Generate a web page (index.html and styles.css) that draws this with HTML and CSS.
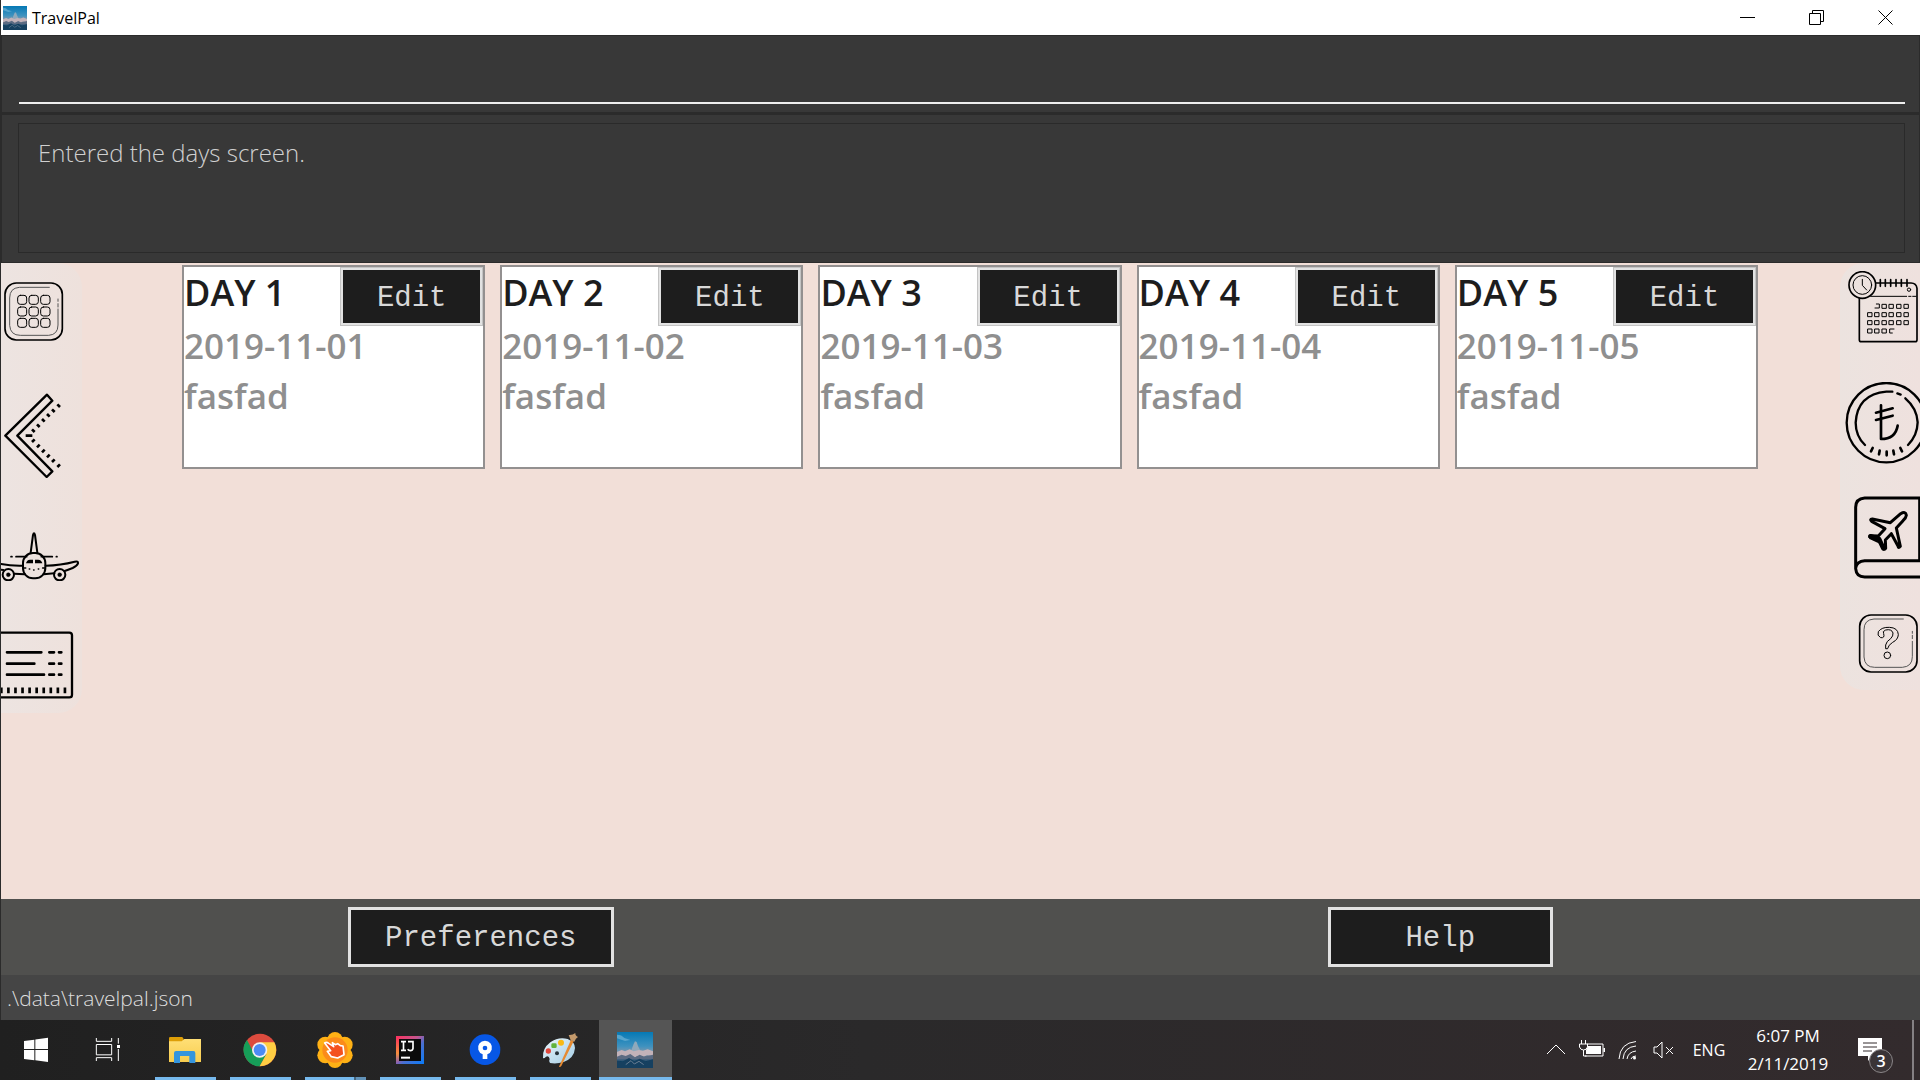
FILE: index.html
```html
<!DOCTYPE html>
<html lang="en">
<head>
<meta charset="utf-8">
<title>TravelPal</title>
<link rel="stylesheet" href="styles.css">
</head>
<body>
<svg class="defs" width="0" height="0" aria-hidden="true">
  <defs>
    <linearGradient id="sky" x1="0" y1="0" x2="0" y2="1"><stop offset="0" stop-color="#0579b5"/><stop offset=".4" stop-color="#3f92bf"/><stop offset=".58" stop-color="#8698ab"/><stop offset=".75" stop-color="#3c5f7d"/><stop offset="1" stop-color="#0b3350"/></linearGradient>
    <linearGradient id="folder" x1="0" y1="0" x2="0" y2="1"><stop offset="0" stop-color="#ffdf76"/><stop offset="1" stop-color="#f8cd4f"/></linearGradient>
    <linearGradient id="ij" x1="0" y1="0" x2="1" y2="1"><stop offset="0" stop-color="#fe315d"/><stop offset=".4" stop-color="#c4568f"/><stop offset=".6" stop-color="#4b6fd0"/><stop offset="1" stop-color="#087cfa"/></linearGradient>
    <linearGradient id="ijl" x1="0" y1="0" x2="0" y2="1"><stop offset="0" stop-color="#fe315d"/><stop offset=".6" stop-color="#f68f3c"/><stop offset="1" stop-color="#7a5bc0"/></linearGradient>
    <linearGradient id="palette" x1="0" y1="0" x2="1" y2="1"><stop offset="0" stop-color="#eaf6fc"/><stop offset="1" stop-color="#a3cce4"/></linearGradient>
    <filter id="soft"><feGaussianBlur stdDeviation="2"/></filter>
    <symbol id="peak" viewBox="0 0 108 108">
      <rect width="108" height="108" fill="url(#sky)"/>
      <g filter="url(#soft)">
        <path d="M0 8q14 0 22 10l18 6-16 3-24-8z" fill="#6db2d6" opacity=".7"/>
        <path d="M44 52l6-16 4-8 5 2 4 12 6 12-4 10H42z" fill="#8fa9bb"/>
        <path d="M0 60l14-6 10 4 14-6 12 6 16-4 12 2 14-4 16 6v14l-18-2-14 6-14-4-16 8-14-6-16 6-16-6z" fill="#c3b2b9"/>
        <path d="M0 74l14-6 12 4 14-6 14 10 14-8 14 6 26-6v14H0z" fill="#5a6a82"/>
        <path d="M0 86l18 2 18-10 16 10 16-8 18 8 22-6v26H0z" fill="#123f60"/>
        <path d="M26 98l16-12 10 10 14-8 14 10" fill="none" stroke="#6b7e92" stroke-width="3"/>
      </g>
    </symbol>
  </defs>
</svg>

<div class="window">
  <header class="titlebar">
    <svg class="app-icon" viewBox="0 0 108 108"><use href="#peak"/></svg>
    <h1 class="app-title">TravelPal</h1>
    <button class="caption-btn" aria-label="Minimize"><svg width="15" height="15"><path d="M0 7.500h15" stroke="#000"/></svg></button>
    <button class="caption-btn" aria-label="Restore"><svg width="15" height="15"><path d="M.5 3.500h11v11H.5zM3.500 3.500v-3h11v11h-3" fill="none" stroke="#000"/></svg></button>
    <button class="caption-btn" aria-label="Close"><svg width="15" height="15"><path d="M.5 .5l14 14M14.500 .5l-14 14" stroke="#000"/></svg></button>
  </header>

  <section class="command"><input class="command-input" type="text" aria-label="Command"></section>
  <section class="result"><output class="result-box">Entered the days screen.</output></section>

  <main class="planner">
    <nav class="strip strip-left" aria-label="Screens">
      <button class="tool" aria-label="Main"><svg width="81" height="59" viewBox="3 81 243 177" class="line">
        <rect x="15" y="84" width="172" height="171" rx="34" stroke-width="5"/>
        <path d="M148 97H58q-29 2-29 32v82q2 30 32 30h85q28-2 28-31v-48M174 156v-10M174 139v-7" stroke-width="3" stroke="#555"/>
        <g stroke-width="3"><rect x="53" y="121" width="27" height="27" rx="8"/><rect x="87" y="121" width="28" height="27" rx="8"/><rect x="122" y="121" width="28" height="27" rx="8"/><rect x="53" y="156" width="27" height="27" rx="8"/><rect x="87" y="156" width="28" height="27" rx="8"/><rect x="122" y="156" width="28" height="27" rx="8"/><rect x="53" y="190" width="27" height="27" rx="8"/><rect x="87" y="190" width="28" height="27" rx="8"/><rect x="122" y="190" width="28" height="27" rx="8"/></g>
      </svg></button>
      <button class="tool" aria-label="Back"><svg width="81" height="87" viewBox="3 408 243 261" class="line">
        <path d="M141 419L16 542l124 124 17-17L52 542 157 437z" stroke-width="7"/>
        <path d="M77 542h20M96 523l8 8M111 508l8 8M126 492l8 8M141 477l8 8M156 463l8 8M172 448l8 8M96 561l8-8M111 577l8-8M126 592l8-8M141 607l8-8M156 621l8-8M172 636l8-8" stroke-width="8" stroke-linecap="butt"/>
      </svg></button>
      <button class="tool" aria-label="Trip"><svg width="81" height="53" viewBox="3 114 243 159" class="line">
        <g stroke-width="6"><path d="M92 188l7-53q3-10 6 0l7 53M3 222q30 6 66 5M137 227q45-1 87-12 11-3 10 5-3 8-16 14-15 6-24 9M43 251l31 2M131 253l32-3M3 239l7 1"/>
        <rect x="69" y="189" width="67" height="76" rx="30"/><circle cx="25" cy="254" r="17"/><circle cx="179" cy="254" r="17"/></g>
        <path d="M33 200h3M48 200h32M124 200h33M169 200h2M70 234h7M128 234h7M88 237h1M101 240h1M115 237h1" stroke-width="5"/>
        <circle cx="25" cy="254" r="6" fill="#000"/><circle cx="179" cy="254" r="6" fill="#000"/>
        <path d="M78 220q2-10 12-11h9v11zM105 209h9q11 1 13 11h-22z" fill="#000" stroke="none"/>
      </svg></button>
      <button class="tool" aria-label="Bookings"><svg width="81" height="68" viewBox="3 423 243 204" class="line">
        <path d="M0 428h208q8 0 8 8v178q0 8-8 8H0" stroke-width="7"/>
        <path d="M21 487h103M21 521h82M21 554h111M148 487h14M148 521h14M148 554h14M177 487h7M177 521h7M177 554h7" stroke-width="8"/>
        <path d="M1 601h202" stroke-width="17" stroke-linecap="butt" stroke-dasharray="8 13.200" stroke-dashoffset="1"/>
      </svg></button>
    </nav>

    <section class="days" aria-label="Days">
      <article class="day"><div class="day-head"><h2>DAY 1</h2><button class="edit">Edit</button></div><p>2019-11-01</p><p>fasfad</p></article>
      <article class="day"><div class="day-head"><h2>DAY 2</h2><button class="edit">Edit</button></div><p>2019-11-02</p><p>fasfad</p></article>
      <article class="day"><div class="day-head"><h2>DAY 3</h2><button class="edit">Edit</button></div><p>2019-11-03</p><p>fasfad</p></article>
      <article class="day"><div class="day-head"><h2>DAY 4</h2><button class="edit">Edit</button></div><p>2019-11-04</p><p>fasfad</p></article>
      <article class="day"><div class="day-head"><h2>DAY 5</h2><button class="edit">Edit</button></div><p>2019-11-05</p><p>fasfad</p></article>
    </section>

    <nav class="strip strip-right" aria-label="Tools">
      <button class="tool" aria-label="Itinerary"><svg width="80" height="79" viewBox="300 48 240 237" class="line">
        <path d="M358 130v124q0 6 6 6h161q6 0 6-6V100q-2-16-18-16H408" stroke-width="5"/>
        <path d="M421 74v20M436 74v20M452 74v20M468 74v20M484 74v20M501 74v20" stroke-width="5"/>
        <circle cx="367" cy="90" r="40" stroke-width="5"/><circle cx="367" cy="90" r="28" stroke-width="3"/><path d="M367 73v18l13 14" stroke-width="3"/>
        <path d="M392 124h108M506 124h7M518 124h10" stroke-width="3"/><circle cx="507" cy="104" r="5" stroke-width="3"/>
        <path d="M405 159h13v-12h-9M427 148h12v12h-12zM448 148h12v12h-12zM471 148h12v12h-12zM493 148h12v12h-12zM384 173h12v12h-12zM405 173h12v12h-12zM427 173h12v12h-12zM448 173h12v12h-12zM471 173h12v12h-12zM493 173h12v12h-12zM384 197h12v12h-12zM405 197h12v12h-12zM427 197h12v12h-12zM448 197h12v12h-12zM471 197h12v12h-12zM493 197h12v12h-12zM384 222h12v12h-12zM405 222h12v12h-12zM427 222h12v12h-12zM462 222h-13v12h8" stroke-width="3"/>
      </svg></button>
      <button class="tool" aria-label="Expenses"><svg width="80" height="82" viewBox="300 381 240 246" class="line" stroke-width="7">
        <circle cx="439" cy="503" r="119"/>
        <path d="M375 570q-28-27-28-67 5-85 92-93h18M472 415l10 4M496 430q35 30 37 72-1 40-29 68"/>
        <path d="M398 579l-5 10M419 587l-2 11M440 590v11M460 587l2 11M481 579l5 10" stroke-width="8"/>
        <path d="M423 451v101q43 0 50-40M408 473l50-13M408 495l50-13" stroke-width="8"/>
      </svg></button>
      <button class="tool" aria-label="Diary"><svg width="80" height="86" viewBox="300 48 240 258" class="line">
        <path d="M545 54H374q-27 2-27 28v184q2 25 27 25h171M545 242H374q-24 2-27 22M539 54v188" stroke-width="9"/>
        <path d="M482 101q15-9 17 5-1 8-10 16l-20 22 12 55q-6 7-7-1l-20-37-18 19 1 25q-5 6-7 0l-9-18-29-13q-6-7 2-7l21 1 20-22-40-22q-7-6 2-7l54 11z" stroke-width="9"/>
        <path d="M391 169l26 8 13 28" stroke-width="14"/>
      </svg></button>
      <button class="tool" aria-label="Help page"><svg width="80" height="59" viewBox="300 402 240 177" class="line">
        <rect x="359" y="405" width="172" height="171" rx="34" stroke-width="5"/>
        <path d="M490 417h-88q-30 2-30 32v82q2 31 32 31h83q30-2 30-32v-46M517 476v-10M517 460v-6" stroke-width="3" stroke="#555"/>
        <path d="M437 505v-10q2-11 15-19 8-8 7-17-4-13-22-9-11 4-6 11 4 14-9 12-12-6-7-18 10-14 33-13 26 1 27 22-1 15-17 23-13 8-15 18z" stroke-width="3"/><circle cx="442" cy="526" r="10" stroke-width="3"/>
      </svg></button>
    </nav>
  </main>

  <footer>
    <div class="actions"><button class="action action-wide">Preferences</button><button class="action">Help</button></div>
    <p class="status">.\data\travelpal.json</p>
  </footer>
</div>

<div class="taskbar">
  <button class="task-sys" aria-label="Start"><svg width="40" height="40" viewBox="48 60 120 120"><path d="M72 93l31-4v28H72zM106 88.500l38-5V117h-38zM72 120h31v31l-31-4zM106 120h38v36l-38-5z" fill="#fff"/></svg></button>
  <button class="task-sys" aria-label="Task View"><svg width="40" height="40" viewBox="264 60 120 120"><path d="M289 84v10h46V84M289 153v-10h46v10M289 103.500h46v31h-46zM355 84v17M355 117v36" fill="none" stroke="#fff" stroke-width="3"/><path d="M351 105h9v9h-9z" fill="#fff"/></svg></button>
  <button class="task-app" aria-label="File Explorer"><svg width="40" height="40" viewBox="495 60 120 120"><path d="M507 85q0-4 4-4h36l4 6v12h-44z" fill="#dd9e07"/><path d="M507 94h38l8-7h50v69h-96z" fill="url(#folder)"/><path d="M522 159v-30q0-6 6-6h52q6 0 6 6v30h-18v-21h-28v21z" fill="#3595de"/></svg></button>
  <button class="task-app" aria-label="Chrome"><svg width="40" height="40" viewBox="720 60 120 120"><circle cx="780" cy="120" r="49" fill="#dc4b3e"/><path d="M741 90a49 49 0 0 0 38 79l20-36-38-5z" fill="#169e58"/><path d="M780 97h43a49 49 0 0 1-44 72l20-36z" fill="#ffce43"/><circle cx="779" cy="120" r="23" fill="#f1f1f1"/><circle cx="779" cy="120" r="18" fill="#4c8bf5"/></svg></button>
  <button class="task-app stacked" aria-label="Clicker"><svg width="40" height="40" viewBox="945 60 120 120"><g fill="#ffb115"><circle cx="1005" cy="89" r="23"/><circle cx="1005" cy="151" r="23"/><circle cx="976" cy="104" r="24"/><circle cx="1034" cy="104" r="24"/><circle cx="976" cy="136" r="24"/><circle cx="1034" cy="136" r="24"/></g><circle cx="1005" cy="120" r="38" fill="#fb8b1b"/><path d="M974 99q6-4 12 1l15 10-4-12 9 6 7-3 8 6 8 1 3 26-19 10-19-4-12-16 10-2z" fill="#f4511e" stroke="#fff" stroke-width="5" stroke-linejoin="round"/></svg></button>
  <button class="task-app" aria-label="IntelliJ IDEA"><svg width="40" height="40" viewBox="120 60 120 120"><path d="M138 78h84v84h-84z" fill="url(#ij)"/><path d="M138 88l9-6v70l-9 10z" fill="url(#ijl)"/><path d="M147 87h66v66h-66z" fill="#0b0b0b"/><path d="M153 95h15M160.500 95v26M153 121h15M174 95h15v20q-1 7-8 7-5 0-8-4" fill="none" stroke="#fff" stroke-width="5"/><path d="M153 140h27v6h-27z" fill="#fff"/></svg></button>
  <button class="task-app" aria-label="Sourcetree"><svg width="40" height="40" viewBox="345 60 120 120"><circle cx="405" cy="119" r="46" fill="#0757e6"/><path d="M398 147v-14a21 21 0 1 1 14 0v14z" fill="#fff"/><circle cx="405" cy="114" r="7" fill="#0757e6"/></svg></button>
  <button class="task-app" aria-label="Paint"><svg width="40" height="40" viewBox="570 60 120 120"><path d="M579 144q-3-28 22-47 25-18 52-10 22 9 22 27-2 30-34 42-22 7-41 3-5-4-1-12-2-11-11-7-6 6-9 4z" fill="url(#palette)"/><circle cx="621" cy="130" r="6" fill="#27333b"/><circle cx="595" cy="123" r="8" fill="#e1483c"/><rect x="604" y="100" width="16" height="14" rx="4" fill="#61b33b"/><circle cx="633" cy="98" r="9" fill="#f9b914"/><path d="M663 89l8 5-37 74q-4 4-7 2z" fill="#e58a32"/><path d="M656 75q12 1 20-6-1 8 8 12-7 4-11 14l-11-5z" fill="#c49a6c"/></svg></button>
  <button class="task-app active" aria-label="TravelPal"><svg width="36" height="36" viewBox="0 0 108 108"><use href="#peak"/></svg></button>

  <div class="tray">
    <button class="tray-btn" aria-label="Show hidden icons"><svg width="18" height="20"><path d="M0 14l9-9 9 9" class="glyph"/></svg></button>
    <button class="tray-btn" aria-label="Battery"><svg width="26" height="20"><path d="M8 4h16v12H6" class="glyph"/><path d="M9 6h13v8H7v-4zM24.500 8h1.500v4h-1.500z" fill="#fff"/><path d="M2.500 0v4M6.500 0v4M.5 4h8v3q-1 3-4 3-3 0-4-3zM4.500 10v6h3" class="glyph"/></svg></button>
    <button class="tray-btn" aria-label="Network"><svg width="20" height="20"><path d="M1 19Q2 3 18 1.500M5 19Q6 7 18 6M9 19q1-7 9-8M13 19q1-3 5-3" class="glyph"/><circle cx="16.500" cy="18" r="1.500" fill="#fff"/></svg></button>
    <button class="tray-btn" aria-label="Muted"><svg width="22" height="20"><path d="M1 7h3l5-5v16l-5-5H1zM13 7l7 7M20 7l-7 7" class="glyph"/></svg></button>
    <button class="lang">ENG</button>
    <button class="clock"><span>6:07 PM</span><span>2/11/2019</span></button>
    <button class="notice" aria-label="Notifications"><svg width="24" height="24"><path d="M0 0h24v18H14l-4 5v-5H0z" fill="#fff"/><path d="M5 5h14M5 9h14M5 13h9" stroke="#332b2d"/></svg><span class="badge">3</span></button>
    <button class="peek" aria-label="Show desktop"></button>
  </div>
</div>
</body>
</html>
```
FILE: styles.css
```css
* { box-sizing: border-box; }
body {
  margin: 0;
  min-height: 100vh;
  display: flex;
  flex-direction: column;
  font-family: "Open Sans", "Noto Sans", sans-serif;
  background: #262425;
}
h1, h2, p { margin: 0; font-weight: inherit; }
button { margin: 0; padding: 0; border: 0; background: none; color: inherit; font: inherit; }
svg { display: block; flex: none; }
.defs { position: absolute; }

.window { flex: 1; display: flex; flex-direction: column; border-left: 1px solid #2b2b2b; }

.titlebar { height: 35px; display: flex; align-items: center; background: #fff; color: #000; }
.app-icon { width: 24px; height: 24px; margin: 0 5px 0 2px; }
.app-title { flex: 1; font-size: 16px; line-height: 24px; }
.caption-btn { width: 69px; height: 35px; display: grid; place-items: center; }

.command {
  height: 78px;
  padding: 0 14px 8px 17px;
  display: flex;
  background: #383838;
  border: 1px solid #2b2b2b;
}
.command-input {
  flex: 1;
  border: 0;
  border-bottom: 2px solid #eee;
  background: none;
  color: #fff;
  font: inherit;
  font-size: 24px;
  outline: 0;
}
.result { height: 150px; padding: 8px 14px 9px 16px; display: flex; background: #383838; border: 1px solid #2b2b2b; border-top-width: 2px; }
.result-box {
  flex: 1;
  padding: 11px 19px;
  border: 1px solid #2a2a2a;
  color: #d0d0d0;
  font-size: 24px;
  font-weight: 300;
  line-height: 36px;
}

.planner { flex: 1; display: flex; align-items: flex-start; background: #f2dfd8; }
.strip { display: flex; flex-direction: column; }
.strip-left { gap: 50px; padding: 19px 0 14px; background: linear-gradient(90deg, #ede4e1, #eee1dc); border-radius: 0 24px 24px 0; }
.strip-right { gap: 32px; padding: 8px 0 17px; background: linear-gradient(90deg, #ece3df, #efe1de); border-radius: 24px 0 0 24px; }
.tool { display: block; }
.line { fill: none; stroke: #000; stroke-linecap: round; stroke-linejoin: round; }

.days { flex: 1; display: grid; grid-template-columns: repeat(5, 1fr); gap: 15px; padding: 2px 82px 0 100px; }
.day { height: 204px; background: #fff; border: 2px solid #939090; color: #8f8f8f; font-size: 35px; font-weight: 600; line-height: 50px; }
.day-head { height: 54px; display: flex; justify-content: space-between; align-items: flex-start; color: #1d1d1d; }
.day h2 { font-size: 36px; line-height: 52px; }
.edit {
  width: 143px;
  height: 59px;
  background: #1d1d1d;
  border: 3px solid #e2e2e2;
  outline: 1px solid #c4c4c4;
  outline-offset: -1px;
}
.edit, .action { padding-top: 4px; color: #d8d8d8; font-family: "Liberation Mono", monospace; font-size: 29px; font-weight: 400; line-height: 36px; }

.actions { height: 76px; display: grid; grid-template-columns: 1fr 1fr; place-items: center; background: #50504e; }
.action { width: 225px; height: 60px; background: #1d1d1d; border: 3px solid #e2e2e2; }
.action-wide { width: 266px; }
.status { height: 45px; padding-left: 6px; background: #454545; color: #dedede; font-size: 21px; font-weight: 300; line-height: 46px; }

.taskbar { height: 60px; display: flex; background: linear-gradient(90deg, #202020, #2a292a 45%, #332b2d); color: #fff; }
.task-sys, .task-app { display: grid; place-items: center; border: 0 solid #76b9ed; }
.task-sys { width: 72px; }
.task-app { width: 61px; margin: 0 7px; padding: 3px 1px 0 0; border-bottom-width: 3px; }
.task-sys + .task-app { margin-left: 11px; }
.task-app.active { width: 73px; margin: 0 1px; background: #555; }
.stacked { border-image: linear-gradient(90deg, #76b9ed 47px, #45647c 47px 49px, #6292b8 49px) 3; }

.tray { margin-left: auto; display: flex; font-size: 17px; line-height: 28px; }
.tray-btn { width: 36px; display: grid; place-items: center; }
.glyph { fill: none; stroke: #fff; stroke-width: 1; }
.lang { width: 54px; font-size: 16px; }
.clock { width: 104px; display: flex; flex-direction: column; justify-content: center; align-items: center; }
.notice { position: relative; width: 72px; padding: 18px 0 0 18px; display: flex; align-items: flex-start; }
.badge {
  position: absolute;
  left: 29px;
  top: 29px;
  width: 24px;
  height: 24px;
  border: 1px solid #8a8688;
  border-radius: 50%;
  background: #3a3436;
  font-size: 16px;
  font-weight: 600;
  line-height: 22px;
  text-align: center;
}
.peek { width: 8px; border-left: 2px solid #858083; }
```
